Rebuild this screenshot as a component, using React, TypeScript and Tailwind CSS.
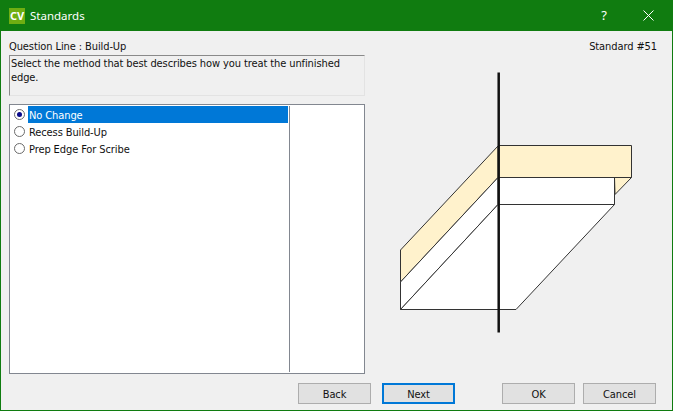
const options = ["No Change", "Recess Build-Up", "Prep Edge For Scribe"];

function Radio({ checked }: { checked: boolean }) {
  return (
    <span className="flex h-[11px] w-[11px] shrink-0 items-center justify-center rounded-full border border-[#6b6b6b] bg-white">
      {checked && <span className="h-[5px] w-[5px] rounded-full bg-[#0a0a8a]" />}
    </span>
  );
}

function DialogButton({ label, focused }: { label: string; focused?: boolean }) {
  return (
    <button
      className={`h-[21px] w-[73px] bg-[#e1e1e1] pt-px text-[11px] text-[#111] ${
        focused ? "border-2 border-[#0078d7]" : "border border-[#adadad]"
      }`}
    >
      {label}
    </button>
  );
}

function Drawing() {
  return (
    <svg width="250" height="262" viewBox="390 72 250 262" className="shrink-0">
      <g stroke="#333" strokeWidth="1" strokeLinejoin="round">
        <polygon points="400.5,250 498,146 498,177.5 400.5,282" fill="#fff2cc" />
        <polygon points="400.5,282 498,177.5 498,204.5 400.5,309.5" fill="#ffffff" />
        <polygon points="400.5,309.5 498,204.5 614.5,204.5 516,309.5" fill="#ffffff" />
        <polygon points="614.5,177.5 631.5,177.5 615,194.5" fill="#fff2cc" />
        <rect x="498.5" y="177.5" width="116" height="27" fill="#ffffff" />
        <rect x="498.5" y="145.5" width="133" height="32" fill="#fff2cc" />
      </g>
      <line x1="498.7" y1="72.5" x2="498.7" y2="332.5" stroke="#111" strokeWidth="2.5" />
    </svg>
  );
}

export default function App() {
  return (
    <div className="flex h-[411px] w-[673px] flex-col overflow-hidden border border-t-0 border-[#107c10] bg-[#f0f0f0] font-['DejaVu_Sans','Liberation_Sans',sans-serif] font-stretch-condensed text-[11px] leading-[13px] tracking-[-0.1px] text-[#111]">
      {/* Title bar */}
      <div className="flex h-[31px] shrink-0 items-center bg-[#107c10] pl-2 font-['Noto_Sans',sans-serif] font-stretch-normal tracking-normal text-white">
        <div className="flex h-[16px] w-[16px] items-center justify-center bg-[#6fae12] text-[11px] font-bold leading-none">
          CV
        </div>
        <span className="ml-[5px] text-[11.5px]">Standards</span>
        <span className="ml-auto mr-[36px] text-[13px]">?</span>
        <svg width="11" height="11" viewBox="0 0 11 11" className="mr-[18px]">
          <path d="M0.5 0.5L10.5 10.5M10.5 0.5L0.5 10.5" stroke="#fff" strokeWidth="1" />
        </svg>
      </div>

      <div className="flex min-h-0 flex-1">
        {/* Left column */}
        <div className="ml-2 flex w-[356px] shrink-0 flex-col">
          <div className="mt-[8px] h-[16px] pt-px">Question Line : Build-Up</div>
          <div className="h-[41px] border border-b-[#e3e3e3] border-r-[#e3e3e3] border-l-[#8a8a8a] border-t-[#8a8a8a] bg-[#f0f0f0] px-px pt-px">
            <p className="w-[340px] leading-[14px]">
              Select the method that best describes how you treat the unfinished edge.
            </p>
          </div>
          <div className="mt-[8px] flex h-[270px] border border-[#828790] bg-white p-px">
            <div className="flex-1">
              <div className="w-[277px]">
                {options.map((option, i) => (
                  <div key={option} className="flex h-[17px] items-center">
                    <div className="flex w-[17px] justify-center">
                      <Radio checked={i === 0} />
                    </div>
                    <div
                      className={`flex h-[17px] flex-1 items-center pl-px pt-px ${
                        i === 0 ? "bg-[#0078d7] text-white" : ""
                      }`}
                    >
                      {option}
                    </div>
                  </div>
                ))}
              </div>
            </div>
            <div className="w-[74px] border-l border-[#828790]" />
          </div>
        </div>

        {/* Right column */}
        <div className="flex min-w-0 flex-1 flex-col">
          <div className="mt-[8px] h-[15px] pr-[15px] pt-px text-right">Standard #51</div>
          <div className="ml-[25px] mt-[18px]">
            <Drawing />
          </div>
        </div>
      </div>

      {/* Footer */}
      <div className="flex h-[36px] shrink-0 items-start pl-[297px] pt-[9px]">
        <DialogButton label="Back" />
        <div className="ml-[11px]">
          <DialogButton label="Next" focused />
        </div>
        <div className="ml-[47px]">
          <DialogButton label="OK" />
        </div>
        <div className="ml-[8px]">
          <DialogButton label="Cancel" />
        </div>
      </div>
    </div>
  );
}
